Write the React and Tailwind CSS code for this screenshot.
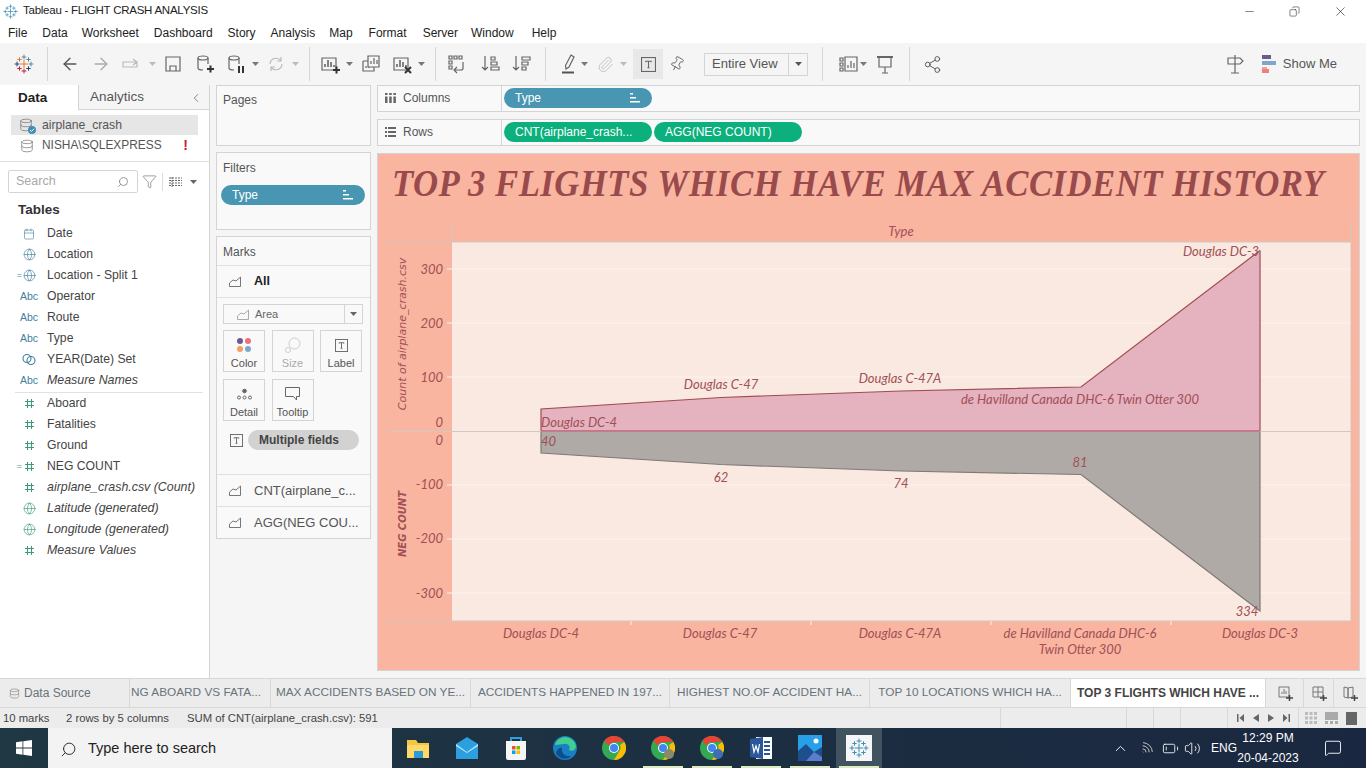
import { Search, Globe, Calendar, ChevronLeft, ChevronUp, Filter, Minus, X, Copy, Volume2, Wifi, BatteryLow, MessageSquare, Database, ArrowLeft, ArrowRight, Pin, Paperclip, Share2 } from 'lucide-react';

const TableauLogo = ({ colors = ['#e8762c', '#5b879b', '#c72035', '#1f447a', '#59879b'], size = 20 }) => {
  const marks = [
    [10, 10, 4, colors[0]],
    [10, 3, 2.4, colors[1]],
    [10, 17, 2.4, colors[2]],
    [3, 10, 2.4, colors[3]],
    [17, 10, 2.4, colors[1]],
    [5.5, 5.5, 2.2, colors[0]],
    [14.5, 5.5, 2.2, colors[4]],
    [5.5, 14.5, 2.2, colors[2]],
    [14.5, 14.5, 2.2, colors[3]],
  ];
  return (
    <svg width={size} height={size} viewBox="0 0 20 20" strokeWidth="1" className="shrink-0">
      {marks.map(([x, y, r, c], i) => (
        <path key={i} d={`M${x - r} ${y}H${x + r}M${x} ${y - r}V${y + r}`} stroke={c} />
      ))}
    </svg>
  );
};

const Ico = ({ children, className = '', w = 20 }) => (
  <svg width={w} height="20" viewBox={`0 0 ${w} 20`} fill="none" stroke="#666" strokeWidth="1.2" className={`shrink-0 ${className}`}>
    {children}
  </svg>
);

const Caret = ({ className = '', color = '#777' }) => (
  <svg width="7" height="4" viewBox="0 0 7 4" className={`shrink-0 ${className}`}><path d="M0 0h7L3.5 4z" fill={color} /></svg>
);

const Sep = ({ className = '' }) => <div className={`w-px h-[34px] bg-[#d6d6d6] shrink-0 ${className}`} />;

const BarsIcon = ({ plus, cross, light }) => (
  <Ico>
    <path d="M2 4h14v12H2z" stroke={light ? '#999' : '#666'} />
    <path d="M5 13v-3M8 13V6M11 13V8M14 13v-2" strokeWidth="1.6" />
    {plus && <path d="M13 16h7M16.5 12.500v7" stroke="#333" strokeWidth="2" />}
    {cross && <path d="M13 13l6 6M19 13l-6 6" stroke="#333" strokeWidth="2" />}
  </Ico>
);

const AreaIcon = ({ color = '#777' }) => (
  <svg width="14" height="13" viewBox="0 0 14 13" fill="none" stroke={color} strokeWidth="1" className="shrink-0">
    <path d="M1.500 11.500h11V2L8 6 5 5 1.500 8z" />
  </svg>
);

const TBox = ({ size = 14 }) => (
  <svg width={size} height={size} viewBox="0 0 14 14" fill="none" stroke="#666" strokeWidth="1" className="shrink-0">
    <rect x=".5" y=".5" width="13" height="13" />
    <path d="M4.500 5V4h5v1M7 4v6M6 10h2" />
  </svg>
);

const Hash = ({ color = '#3e9a78' }) => (
  <svg width="11" height="11" viewBox="0 0 11 11" fill="none" stroke={color} strokeWidth="1.1" className="shrink-0">
    <path d="M3.500 1v9M7.500 1v9M1 3.500h9M1 7.500h9" />
  </svg>
);

const SortMini = ({ color = '#fff' }) => (
  <svg width="12" height="10" viewBox="0 0 12 10" className="shrink-0"><path d="M1 0h3v1.500H1zM1 4h6v1.500H1zM1 8h10v1.500H1z" fill={color} /></svg>
);

const fieldsTop = [
  { icon: 'cal', name: 'Date' },
  { icon: 'globe', name: 'Location' },
  { icon: 'globe', name: 'Location - Split 1', calc: true },
  { icon: 'abc', name: 'Operator' },
  { icon: 'abc', name: 'Route' },
  { icon: 'abc', name: 'Type' },
  { icon: 'set', name: 'YEAR(Date) Set' },
  { icon: 'abc', name: 'Measure Names', italic: true },
];

const fieldsBottom = [
  { icon: 'hash', name: 'Aboard' },
  { icon: 'hash', name: 'Fatalities' },
  { icon: 'hash', name: 'Ground' },
  { icon: 'hash', name: 'NEG COUNT', calc: true },
  { icon: 'hash', name: 'airplane_crash.csv (Count)', italic: true },
  { icon: 'globeg', name: 'Latitude (generated)', italic: true },
  { icon: 'globeg', name: 'Longitude (generated)', italic: true },
  { icon: 'hash', name: 'Measure Values', italic: true },
];

const FieldRow = ({ icon, name, calc, italic }) => (
  <div className="h-[21px] flex items-center">
    <div className="w-[22px] shrink-0 text-right text-[9px] leading-none text-[#4a8aa5]">{calc ? '=' : ''}</div>
    <div className="w-[14px] shrink-0 flex justify-center">
      {icon === 'cal' && <Calendar size={12} strokeWidth={1.2} color="#3f7f9c" />}
      {icon === 'globe' && <Globe size={13} strokeWidth={1.2} color="#3f7f9c" />}
      {icon === 'globeg' && <Globe size={13} strokeWidth={1.2} color="#3e9a78" />}
      {icon === 'hash' && <Hash />}
      {icon === 'abc' && <span className="text-[10.500px] font-medium text-[#3f7f9c]">Abc</span>}
      {icon === 'set' && (
        <svg width="14" height="13" viewBox="0 0 14 13" fill="none" stroke="#3f7f9c" strokeWidth="1.1" className="shrink-0"><circle cx="5" cy="5.500" r="4" /><circle cx="9" cy="7.500" r="4" /></svg>
      )}
    </div>
    <span className={`ml-[11px] text-[#444] whitespace-nowrap ${italic ? 'italic text-[12.400px]' : 'text-[12.200px]'}`}>{name}</span>
  </div>
);

const MarkBtn = ({ label, muted, children }) => (
  <div className="w-[42px] h-[42px] border border-[#d4d4d4] flex flex-col items-center justify-end">
    <div className="h-[20px] flex items-center justify-center">{children}</div>
    <span className={`text-[11px] leading-[16px] ${muted ? 'text-[#aaa]' : 'text-[#555]'}`}>{label}</span>
  </div>
);

const Pill = ({ color, w, children, sort }) => (
  <div className={`h-[20px] rounded-full ${color} ${w} flex items-center pl-[11px] pr-[11px] text-[12px] text-white justify-between shrink-0 whitespace-nowrap`}>
    <span>{children}</span>
    {sort && <SortMini />}
  </div>
);

const tabs = [
  { label: 'NG ABOARD VS FATA...', w: 'w-[141px]', cls: 'justify-start pl-[1px]' },
  { label: 'MAX ACCIDENTS BASED ON YE...', w: 'w-[200px]', cls: 'justify-center' },
  { label: 'ACCIDENTS HAPPENED IN 197...', w: 'w-[199px]', cls: 'justify-center' },
  { label: 'HIGHEST NO.OF ACCIDENT HA...', w: 'w-[200px]', cls: 'justify-center' },
  { label: 'TOP 10 LOCATIONS WHICH HA...', w: 'w-[201px]', cls: 'justify-center' },
];

const Chart = () => {
  const topPts = '541,431 541,409 721,397.500 901,391 1081,387 1260,250.500 1260,431';
  const botPts = '541,432 541,453 721,464.500 901,471 1081,474.500 1260,611 1260,432';
  const labelCls = 'fill-[#a24f57] italic';
  const titleCls = "fill-[#a24f57] italic font-['DejaVu_Sans',sans-serif]";
  return (
    <svg viewBox="378 221 983 449" width="983" height="449" className="block font-['Lato',sans-serif] text-[13px]">
      <rect x="452" y="242" width="899" height="379" fill="#f9e9e0" />
      {[269, 323, 377, 485, 539, 593].map(y => (
        <g key={y}>
          <path d={`M452 ${y}H1351`} stroke="#fbf3ee" strokeWidth="1" />
          <path d={`M447 ${y}H452`} stroke="#fbf3ee" strokeWidth="1" />
        </g>
      ))}
      <path d="M387 242H1351M387 621H1351M452 221V242M1351 221V621" stroke="#d2c7c2" strokeWidth="1" />
      {[631, 811, 991, 1171].map(x => <path key={x} d={`M${x} 621v4`} stroke="#fbf3ee" />)}

      <polygon points={topPts} fill="#e5b2bf" />
      <path d="M541 431V409L721 397.500 901 391 1081 387 1260 250.500" fill="none" stroke="#a04c50" strokeWidth="1.200" />
      <path d="M1260 250.500V431" fill="none" stroke="#b06d78" strokeWidth="1.600" />
      <polygon points={botPts} fill="#b0aaa6" />
      <path d="M541 432V453L721 464.500 901 471 1081 474.500 1260 611V432" fill="none" stroke="#7f7977" strokeWidth="1.200" />
      <path d="M387 431.500H1351" stroke="#d2c7c2" strokeWidth="1" />
      <path d="M541 431H1260" stroke="#bb6479" strokeWidth="1.500" />

      <text x="901" y="236" textAnchor="middle" className={labelCls}>Type</text>
      {[['300', 274], ['200', 328], ['100', 382], ['0', 427], ['0', 445], ['-100', 489], ['-200', 543], ['-300', 598]].map(([t, y], i) => (
        <text key={i} x="443" y={y} textAnchor="end" className={labelCls}>{t}</text>
      ))}
      <text transform="translate(406 334) rotate(-90)" textAnchor="middle" className={`${titleCls} text-[11px]`}>Count of airplane_crash.csv</text>
      <text transform="translate(406 524) rotate(-90)" textAnchor="middle" className={`${titleCls} font-bold text-[10px]`}>NEG COUNT</text>

      <text x="541" y="427" className={labelCls}>Douglas DC-4</text>
      <text x="721" y="389" textAnchor="middle" className={labelCls}>Douglas C-47</text>
      <text x="900" y="383" textAnchor="middle" className={labelCls}>Douglas C-47A</text>
      <text x="1080" y="404" textAnchor="middle" className={labelCls}>de Havilland Canada DHC-6 Twin Otter 300</text>
      <text x="1259" y="256" textAnchor="end" className={labelCls}>Douglas DC-3</text>
      <text x="541" y="446" className={labelCls}>40</text>
      <text x="721" y="482" textAnchor="middle" className={labelCls}>62</text>
      <text x="901" y="488" textAnchor="middle" className={labelCls}>74</text>
      <text x="1080" y="467" textAnchor="middle" className={labelCls}>81</text>
      <text x="1247" y="616" textAnchor="middle" className={labelCls}>334</text>

      <text x="541" y="638" textAnchor="middle" className={labelCls}>Douglas DC-4</text>
      <text x="720" y="638" textAnchor="middle" className={labelCls}>Douglas C-47</text>
      <text x="900" y="638" textAnchor="middle" className={labelCls}>Douglas C-47A</text>
      <text x="1080" y="638" textAnchor="middle" className={labelCls}>de Havilland Canada DHC-6</text>
      <text x="1080" y="654" textAnchor="middle" className={labelCls}>Twin Otter 300</text>
      <text x="1260" y="638" textAnchor="middle" className={labelCls}>Douglas DC-3</text>
    </svg>
  );
};

const TaskIcon = ({ ml, running, children, bg }) => (
  <div className={`${ml} w-[46px] h-[40px] flex items-center justify-center relative shrink-0 ${bg || ''}`}>
    {children}
    {running && <div className="absolute bottom-0 inset-x-[3px] h-[2px] bg-[#dcebc2]" />}
  </div>
);

const ChromeIcon = ({ badge }) => (
  <svg width="24" height="24" viewBox="0 0 24 24">
    <circle cx="12" cy="12" r="12" fill="#34a853" />
    <path d="M12 0a12 12 0 0 1 10.400 6H12a6 6 0 0 0-5.600 3.800L2.400 4.600A12 12 0 0 1 12 0z" fill="#ea4335" />
    <path d="M22.400 6A12 12 0 0 1 12 24l5-8.500A6 6 0 0 0 18 9z" fill="#fbbc05" />
    <circle cx="12" cy="12" r="5" fill="#fff" />
    <circle cx="12" cy="12" r="4" fill="#4285f4" />
    {badge && <circle cx="18" cy="18" r="5" fill={badge} />}
  </svg>
);

export default function App() {
  return (
    <div className="w-[1366px] h-[768px] overflow-hidden flex flex-col bg-[#f5f5f5] font-['Liberation_Sans',Arial,sans-serif] text-[#333]">
      {/* Title bar */}
      <div className="h-[22px] bg-white flex items-center shrink-0">
        <div className="ml-[3px]"><TableauLogo size={15} colors={['#3f8fb5', '#3f8fb5', '#3f8fb5', '#3f8fb5', '#3f8fb5']} /></div>
        <span className="ml-[5px] text-[11.500px] tracking-[-0.25px] text-[#222]">Tableau - FLIGHT CRASH ANALYSIS</span>
        <div className="ml-auto flex items-center">
          <Minus size={13} strokeWidth={1} color="#222" />
          <Copy size={11} strokeWidth={1.2} color="#222" className="ml-[33px] -scale-x-100" />
          <X size={15} strokeWidth={1} color="#222" className="ml-[33px] mr-[18px]" />
        </div>
      </div>

      {/* Menu */}
      <div className="h-[21px] bg-white flex items-center text-[12px] text-[#222] shrink-0">
        <span className="ml-[8px]">File</span>
        <span className="ml-[15px]">Data</span>
        <span className="ml-[14px]">Worksheet</span>
        <span className="ml-[15px]">Dashboard</span>
        <span className="ml-[15px]">Story</span>
        <span className="ml-[15px]">Analysis</span>
        <span className="ml-[14px]">Map</span>
        <span className="ml-[16px]">Format</span>
        <span className="ml-[16px]">Server</span>
        <span className="ml-[13px]">Window</span>
        <span className="ml-[18px]">Help</span>
      </div>

      {/* Toolbar */}
      <div className="h-[42px] flex items-center shrink-0">
        <div className="ml-[14px]"><TableauLogo /></div>
        <Sep className="ml-[13px]" />
        <ArrowLeft size={20} strokeWidth={1.6} color="#555" className="ml-[12px] shrink-0" />
        <ArrowRight size={20} strokeWidth={1.6} color="#aaa" className="ml-[11px] shrink-0" />
        <Ico className="ml-[10px]"><path d="M2 8h14v5H2zM12 5l4 3-4 3" stroke="#bbb" /></Ico>
        <Caret className="ml-[8px]" color="#bbb" />
        <Ico className="ml-[7px]"><path d="M3 3h14v14H3zM7 17v-5h6v5" /></Ico>
        <Ico className="ml-[12px]">
          <ellipse cx="8" cy="4" rx="5" ry="2" /><path d="M3 4v10q0 2 5 2M13 4v6" />
          <path d="M12 15h7M15.500 11.500v7" stroke="#333" strokeWidth="2" />
        </Ico>
        <Ico className="ml-[11px]">
          <ellipse cx="8" cy="4" rx="5" ry="2" /><path d="M3 4v10q0 2 5 2M13 4v6" />
          <path d="M13 12v7M17 12v7" stroke="#333" strokeWidth="2" />
        </Ico>
        <Caret className="ml-[6px]" />
        <Ico className="ml-[7px]"><path d="M4 10a6 6 0 0 1 11-3M16 10a6 6 0 0 1-11 3M15 3v4h-4M5 17v-4h4" stroke="#bbb" /></Ico>
        <Caret className="ml-[6px]" color="#bbb" />
        <Sep className="ml-[10px]" />
        <div className="ml-[10px]"><BarsIcon plus /></div>
        <Caret className="ml-[6px]" />
        <Ico className="ml-[8px]"><path d="M7 2h11v11H7zM2 7h5M2 7v10h11v-4M10 10V7M13 10V4M16 10V6M5 14v-2M8 14v-1" /></Ico>
        <div className="ml-[11px]"><BarsIcon cross /></div>
        <Caret className="ml-[6px]" />
        <Sep className="ml-[10px]" />
        <Ico className="ml-[11px]"><path d="M2 2h3v3H2zM7 2h3v3H7zM12 2h3v3h-3zM2 7h3v3H2zM2 12h3v3H2zM16 8v6a2 2 0 0 1-2 2H8M10 13l-3 3 3 3" /></Ico>
        <Ico className="ml-[13px]"><path d="M5 2v14M2 13l3 3 3-3M11 3h4v3h-4zM11 8h6v3h-6zM11 13h8v3h-8z" /></Ico>
        <Ico className="ml-[11px]"><path d="M5 2v14M2 13l3 3 3-3M11 3h8v3h-8zM11 8h6v3h-6zM11 13h4v3h-4z" /></Ico>
        <Sep className="ml-[14px]" />
        <Ico className="ml-[12px]">
          <path d="M13 1l3 2-5 10-3 2-.500-3.500z" />
          <path d="M4 18.500h12" stroke="#555" strokeWidth="2" />
        </Ico>
        <Caret className="ml-[3px]" />
        <div className="ml-[7px] w-[20px] flex justify-center shrink-0"><Paperclip size={17} strokeWidth={1.2} color="#bbb" /></div>
        <Caret className="ml-[5px]" color="#bbb" />
        <div className="ml-[6px] w-[30px] h-[30px] bg-[#e8e8e8] flex items-center justify-center shrink-0"><TBox size={15} /></div>
        <Pin size={16} strokeWidth={1.2} color="#555" className="ml-[6px] mr-[2px] rotate-[30deg] shrink-0" />
        <div className="ml-[17px] w-[104px] h-[23px] border border-[#d4d4d4] flex items-center shrink-0">
          <span className="pl-[7px] flex-1 text-[13px] text-[#555]">Entire View</span>
          <div className="w-[19px] h-full border-l border-[#d4d4d4] flex items-center justify-center"><Caret color="#555" /></div>
        </div>
        <Sep className="ml-[14px]" />
        <Ico className="ml-[15px]"><path d="M2 4h3v3H2zM2 9h3v3H2zM2 14h3v3H2zM7 3h12v14H7zM10 14v-3M13 14V7M16 14v-5" /></Ico>
        <Caret className="ml-[2px]" />
        <Ico className="ml-[8px]"><path d="M2 3h16" strokeWidth="2" /><path d="M4 3v10h12V3M10 13v6M7 19h6" /></Ico>
        <Sep className="ml-[14px]" />
        <div className="ml-[12px] w-[20px] flex justify-center shrink-0"><Share2 size={19} strokeWidth={1.200} color="#555" /></div>
        <div className="ml-auto flex items-center">
          <Ico><path d="M10 1v18M6 19h8M3 4h12l3 3-3 3H3z" /></Ico>
          <svg width="14" height="18" viewBox="0 0 14 18" className="ml-[17px] shrink-0">
            <rect width="9" height="4" fill="#6d5a8c" />
            <rect y="6" width="14" height="4" fill="#7fa6cc" />
            <rect y="12" width="5" height="2" fill="#f0a878" />
            <rect y="14" width="7" height="4" fill="#ef7f85" />
          </svg>
          <span className="ml-[7px] mr-[29px] text-[13px] text-[#555]">Show Me</span>
        </div>
      </div>

      {/* Main */}
      <div className="h-[593px] flex shrink-0">
        {/* Data pane */}
        <aside className="w-[210px] h-full bg-white border-r border-[#d4d4d4] shrink-0">
          <div className="h-[25px] flex">
            <div className="w-[78px] pl-[18px] pt-[1px] flex items-center text-[13.500px] font-bold text-[#222]">Data</div>
            <div className="flex-1 bg-[#f5f5f5] border-l border-b border-[#d4d4d4] flex items-center pl-[11px] pr-[6px] pt-[1px] text-[13.500px] text-[#555]">
              <span className="flex-1">Analytics</span>
              <ChevronLeft size={14} strokeWidth={1.3} color="#666" />
            </div>
          </div>
          <div className="mt-[5px] mx-[11px] h-[20px] bg-[#e6e6e6] flex items-center pl-[8px] pr-[4px] text-[#555]">
            <div className="relative w-[15px] h-[15px] shrink-0">
              <Database size={14} strokeWidth={1.1} color="#666" />
              <svg width="8" height="8" viewBox="0 0 8 8" className="absolute -right-[2px] -bottom-[1px]"><circle cx="4" cy="4" r="4" fill="#3f8fb5" /><path d="M2 4l1.500 1.500L6 2.800" fill="none" stroke="#fff" /></svg>
            </div>
            <span className="ml-[8px] text-[12.200px]">airplane_crash</span>
          </div>
          <div className="mx-[11px] h-[20px] flex items-center pl-[9px] pt-[1px] text-[#555]">
            <Database size={14} strokeWidth={1.1} color="#666" />
            <span className="ml-[8px] text-[11.900px] flex-1">NISHA\SQLEXPRESS</span>
            <span className="mr-[10px] text-[#c72035] font-bold text-[14px]">!</span>
          </div>
          <div className="mt-[6px] h-px bg-[#e2e2e2]" />
          <div className="mt-[8px] h-[23px] flex items-center">
            <div className="ml-[8px] w-[130px] h-[23px] border border-[#d4d4d4] rounded-[2px] flex items-center pl-[7px] pr-[8px]">
              <span className="flex-1 text-[12.500px] text-[#a8a8a8]">Search</span>
              <Search size={12} strokeWidth={1.3} color="#666" className="-scale-x-100" />
            </div>
            <Filter size={15} strokeWidth={1} color="#666" className="ml-[4px]" />
            <div className="ml-[5px] w-px h-[18px] bg-[#ddd]" />
            <svg width="13" height="10" viewBox="0 0 13 10" className="ml-[6px]" fill="none" stroke="#666"><path d="M0 1h13M0 3.500h13M0 6h13M0 8.500h13M3 0v10" strokeDasharray="2 1" /></svg>
            <Caret className="ml-[8px]" color="#666" />
          </div>
          <div className="mt-[8px] pl-[18px] h-[18px] flex items-center text-[13.500px] font-bold text-[#333]">Tables</div>
          <div className="mt-[4px]">
            {fieldsTop.map(f => <FieldRow key={f.name} {...f} />)}
          </div>
          <div className="mt-[1px] ml-[15px] w-[188px] h-px bg-[#e2e2e2]" />
          <div>
            {fieldsBottom.map(f => <FieldRow key={f.name} {...f} />)}
          </div>
        </aside>

        {/* Cards column */}
        <div className="ml-[6px] w-[155px] flex flex-col gap-[6px] shrink-0">
          <div className="h-[61px] bg-[#f9f9f9] border border-[#d4d4d4] pl-[6px] pt-[5px] text-[12px] text-[#555]">Pages</div>
          <div className="h-[78px] bg-[#f9f9f9] border border-[#d4d4d4] text-[12px] text-[#555]">
            <div className="pl-[6px] pt-[6px] h-[32px]">Filters</div>
            <div className="ml-[4px]"><Pill color="bg-[#4996b2]" w="w-[144px]" sort>Type</Pill></div>
          </div>
          <div className="h-[303px] bg-[#f9f9f9] border border-[#d4d4d4] text-[#555]">
            <div className="h-[29px] border-b border-[#e0e0e0] pl-[6px] pt-[2px] flex items-center text-[12px]">Marks</div>
            <div className="h-[32px] border-b border-[#e0e0e0] pl-[11px] flex items-center">
              <AreaIcon />
              <span className="ml-[12px] text-[12.500px] font-bold text-[#222]">All</span>
            </div>
            <div className="mt-[6px] ml-[6px] w-[140px] h-[20px] border border-[#d4d4d4] flex items-center">
              <div className="ml-[12px]"><AreaIcon color="#aaa" /></div>
              <span className="ml-[5px] flex-1 text-[11px] text-[#666]">Area</span>
              <div className="w-[18px] h-full border-l border-[#d4d4d4] flex items-center justify-center"><Caret color="#666" /></div>
            </div>
            <div className="mt-[6px] ml-[6px] flex gap-[6.500px]">
              <MarkBtn label="Color">
                <svg width="16" height="16" viewBox="0 0 16 16"><circle cx="4" cy="4" r="3" fill="#6d5a8c" /><circle cx="12" cy="4" r="3" fill="#ef6f7f" /><circle cx="4" cy="12" r="3" fill="#f0a060" /><circle cx="12" cy="12" r="3" fill="#7fa6cc" /></svg>
              </MarkBtn>
              <MarkBtn label="Size" muted>
                <svg width="16" height="16" viewBox="0 0 16 16" fill="none" stroke="#ccc"><circle cx="9.500" cy="6.500" r="5.500" /><circle cx="3" cy="13" r="2.500" /></svg>
              </MarkBtn>
              <MarkBtn label="Label"><TBox size={13} /></MarkBtn>
            </div>
            <div className="mt-[7px] ml-[6px] flex gap-[6.500px]">
              <MarkBtn label="Detail">
                <svg width="15" height="12" viewBox="0 0 15 12" fill="none" stroke="#666"><circle cx="7.500" cy="3" r="1.800" fill="#666" /><circle cx="2" cy="9.500" r="1.500" /><circle cx="7.500" cy="9.500" r="1.500" /><circle cx="13" cy="9.500" r="1.500" /></svg>
              </MarkBtn>
              <MarkBtn label="Tooltip">
                <svg width="15" height="14" viewBox="0 0 15 14" fill="none" stroke="#666"><path d="M.5.5h14v9h-3v3.500l-3-3.500h-8z" /></svg>
              </MarkBtn>
            </div>
            <div className="mt-[9px] flex items-center ml-[13px]">
              <TBox size={13} />
              <div className="ml-[5px] w-[111px] h-[20px] rounded-full bg-[#d2d2d2] pl-[11px] flex items-center text-[12px] font-semibold text-[#444]">Multiple fields</div>
            </div>
            <div className="mt-[24px] h-[32px] border-t border-[#e0e0e0] pl-[11px] flex items-center">
              <AreaIcon />
              <span className="ml-[12px] text-[13px]">CNT(airplane_c...</span>
            </div>
            <div className="h-[32px] border-t border-[#e0e0e0] pl-[11px] flex items-center">
              <AreaIcon />
              <span className="ml-[12px] text-[13px]">AGG(NEG COU...</span>
            </div>
          </div>
        </div>

        {/* Shelves and view */}
        <div className="ml-[6px] w-[983px] shrink-0 flex flex-col">
          <div className="h-[27px] bg-[#f9f9f9] border border-[#d4d4d4] flex items-center">
            <div className="w-[124px] h-full border-r border-[#d4d4d4] flex items-center pl-[7px] pb-[2px] text-[12px] text-[#555]">
              <svg width="11" height="10" viewBox="0 0 11 10"><path d="M0 0h2.500v2H0zM4.200 0h2.500v2H4.200zM8.400 0h2.500v2H8.400zM0 3.500h2.500V10H0zM4.200 3.500h2.500V10H4.200zM8.400 3.500h2.500V10H8.400z" fill="#666" /></svg>
              <span className="ml-[7px]">Columns</span>
            </div>
            <div className="ml-[2px] mb-[2px]"><Pill color="bg-[#4996b2]" w="w-[148px]" sort>Type</Pill></div>
          </div>
          <div className="mt-[7px] h-[27px] bg-[#f9f9f9] border border-[#d4d4d4] flex items-center">
            <div className="w-[124px] h-full border-r border-[#d4d4d4] flex items-center pl-[7px] pb-[2px] text-[12px] text-[#555]">
              <svg width="11" height="10" viewBox="0 0 11 10"><path d="M0 0h2v2H0zM3 0h8v2H3zM0 4h2v2H0zM3 4h8v2H3zM0 8h2v2H0zM3 8h8v2H3z" fill="#666" /></svg>
              <span className="ml-[7px]">Rows</span>
            </div>
            <div className="ml-[2px] mb-[2px] flex gap-[2px]">
              <Pill color="bg-[#0bb07c]" w="w-[148px]">CNT(airplane_crash...</Pill>
              <Pill color="bg-[#0bb07c]" w="w-[148px]">AGG(NEG COUNT)</Pill>
            </div>
          </div>
          <div className="mt-[7px] h-[518px] bg-[#f9b59f] border border-[#d4d4d4] overflow-hidden">
            <div className="h-[67px] pl-[14px] pt-[7px]">
              <div className="origin-left scale-x-[0.914] w-fit whitespace-nowrap font-['Liberation_Serif',serif] font-bold italic text-[38px] leading-[44px] tracking-[0.5px] text-[#994a4d]">TOP 3 FLIGHTS WHICH HAVE MAX ACCIDENT HISTORY</div>
            </div>
            <Chart />
          </div>
        </div>
      </div>

      {/* Sheet tabs */}
      <div className="h-[29px] flex bg-[#ececec] border-t border-[#d8d8d8] text-[11.800px] text-[#68737a] shrink-0">
        <div className="w-[130px] flex items-center pl-[9px] border-r border-[#d8d8d8] text-[12px]">
          <Database size={11} strokeWidth={1.2} color="#777" />
          <span className="ml-[4px]">Data Source</span>
        </div>
        {tabs.map(t => (
          <div key={t.label} className={`${t.w} flex items-center overflow-hidden whitespace-nowrap border-r border-[#d8d8d8] ${t.cls}`}>{t.label}</div>
        ))}
        <div className="w-[194px] bg-white flex items-center justify-center text-[12px] font-semibold text-[#444] whitespace-nowrap">TOP 3 FLIGHTS WHICH HAVE ...</div>
        <div className="flex-1 flex">
          <div className="w-[38px] flex items-center justify-center border-l border-[#d8d8d8]">
            <svg width="16" height="16" viewBox="0 0 16 16" fill="none" stroke="#777"><path d="M2 2h10v10H2zM5 9V7M7 9V4M9 9V6" /><path d="M9 13h7M12.500 10v6" stroke="#444" strokeWidth="1.500" /></svg>
          </div>
          <div className="w-[30px] flex items-center justify-center border-l border-[#d8d8d8]">
            <svg width="16" height="16" viewBox="0 0 16 16" fill="none" stroke="#777"><path d="M2 2h10v10H2zM7 2v10M2 7h10" /><path d="M9 13h7M12.500 10v6" stroke="#444" strokeWidth="1.500" /></svg>
          </div>
          <div className="flex-1 flex items-center justify-center border-l border-[#d8d8d8]">
            <svg width="16" height="16" viewBox="0 0 16 16" fill="none" stroke="#777"><path d="M2 2l4 1v10l-4-1zM6 3l5-1v10l-5 1z" /><path d="M9 13h7M12.500 10v6" stroke="#444" strokeWidth="1.500" /></svg>
          </div>
        </div>
      </div>

      {/* Status bar */}
      <div className="h-[21px] flex items-center bg-[#ececec] border-t border-[#d8d8d8] text-[11.300px] text-[#444] shrink-0">
        <span className="ml-[3px] w-[63px]">10 marks</span>
        <span className="w-[121px]">2 rows by 5 columns</span>
        <span className="w-[813px]">SUM of CNT(airplane_crash.csv): 591</span>
        <div className="h-full w-[126px] border-l border-[#d8d8d8]" />
        <div className="h-full w-[27px] border-l border-[#d8d8d8]" />
        <div className="h-full w-[27px] border-l border-[#d8d8d8]" />
        <div className="h-full w-[47px] border-l border-[#d8d8d8]" />
        <div className="h-full w-[71px] border-l border-[#d8d8d8] flex items-center justify-around px-[4px]">
          <svg width="7" height="8" viewBox="0 0 7 8" fill="#666"><path d="M0 0h1.500v8H0zM7 0v8L2.500 4z" /></svg>
          <svg width="6" height="8" viewBox="0 0 6 8" fill="#666"><path d="M6 0v8L0 4z" /></svg>
          <svg width="6" height="8" viewBox="0 0 6 8" fill="#666"><path d="M0 0v8l6-4z" /></svg>
          <svg width="7" height="8" viewBox="0 0 7 8" fill="#666"><path d="M7 0H5.500v8H7zM0 0v8l4.500-4z" /></svg>
        </div>
        <div className="h-full flex-1 border-l border-[#d8d8d8] flex items-center pl-[6px] gap-[8px]">
          <svg width="12" height="12" viewBox="0 0 12 12" fill="#bbb"><path d="M0 0h3v3H0zM4.500 0h3v3h-3zM9 0h3v3H9zM0 4.500h3v3H0zM4.500 4.500h3v3h-3zM9 4.500h3v3H9zM0 9h3v3H0zM4.500 9h3v3h-3zM9 9h3v3H9z" /></svg>
          <svg width="13" height="12" viewBox="0 0 13 12" fill="#aaa"><path d="M0 0h13v8H0zM0 9h3v3H0zM5 9h3v3H5zM10 9h3v3h-3z" /></svg>
          <svg width="11" height="13" viewBox="0 0 11 13" fill="#666"><path d="M0 0h11v13H0z" /></svg>
        </div>
      </div>

      {/* Windows taskbar */}
      <div className="h-[40px] flex items-center bg-linear-to-r from-[#1f3843] to-[#1a2740] shrink-0">
        <svg width="16" height="16" viewBox="0 0 16 16" fill="#fff" className="ml-[16px] shrink-0"><path d="M0 2.200l6.500-.9v6.300H0zM7.300 1.200L16 0v7.600H7.300zM0 8.400h6.500v6.300L0 13.800zM7.300 8.400H16V16l-8.700-1.200z" /></svg>
        <div className="ml-[16px] w-[344px] h-[40px] bg-[#f3f3f3] flex items-center pt-[2px] shrink-0">
          <Search size={17} strokeWidth={1.3} color="#222" className="ml-[12px] -scale-x-100" />
          <span className="ml-[11px] text-[14.500px] text-[#222]">Type here to search</span>
        </div>
        <TaskIcon ml="ml-[3px]">
          <svg width="24" height="22" viewBox="0 0 24 22"><path d="M1 3h9l2 3h11v15H1z" fill="#f4c542" /><path d="M1 8h22v13H1z" fill="#ffd968" /><path d="M8 14h9v7H8z" fill="#2d9ad8" /></svg>
        </TaskIcon>
        <TaskIcon ml="ml-[3px]">
          <svg width="24" height="22" viewBox="0 0 24 22"><path d="M1 7L12 0l11 7v15H1z" fill="#2b9fe0" /><path d="M1 7l11 8 11-8v2l-11 7L1 9z" fill="#bfe5fa" /></svg>
        </TaskIcon>
        <TaskIcon ml="ml-[3px]">
          <svg width="22" height="24" viewBox="0 0 22 24"><path d="M1 5h20v17a2 2 0 0 1-2 2H3a2 2 0 0 1-2-2z" fill="#f5f5f5" /><path d="M6 5V2h10v3" fill="none" stroke="#2b9fe0" strokeWidth="2" /><rect x="7" y="10" width="3.500" height="3.500" fill="#f25022" /><rect x="11.500" y="10" width="3.500" height="3.500" fill="#7fba00" /><rect x="7" y="14.500" width="3.500" height="3.500" fill="#00a4ef" /><rect x="11.500" y="14.500" width="3.500" height="3.500" fill="#ffb900" /></svg>
        </TaskIcon>
        <TaskIcon ml="ml-[3px]">
          <svg width="24" height="24" viewBox="0 0 24 24"><circle cx="12" cy="12" r="12" fill="#1a7fc4" /><path d="M2 8A11 11 0 0 1 23 10c0 4-4 6-7 4 2-3-1-7-5-6-5 0-9 2-9 0z" fill="#3fcf8e" /><path d="M9 12c-1 5 3 9 9 8-3 4-12 4-15-3 1-4 4-6 6-5z" fill="#0c4f8a" /></svg>
        </TaskIcon>
        <TaskIcon ml="ml-[3px]"><ChromeIcon /></TaskIcon>
        <TaskIcon ml="ml-[3px]" running><ChromeIcon badge="#8a8a6a" /></TaskIcon>
        <TaskIcon ml="ml-[3px]" running><ChromeIcon badge="#3d6fb0" /></TaskIcon>
        <TaskIcon ml="ml-[3px]" running>
          <svg width="24" height="24" viewBox="0 0 24 24"><path d="M7 1h16v22H7z" fill="#fff" /><path d="M15 6h6M15 10h6M15 14h6M15 18h6" stroke="#2b579a" strokeWidth="2" /><path d="M1 3l13-2v22L1 21z" fill="#2b579a" /><path d="M3.500 8l1.500 8 2-6 2 6 1.500-8" fill="none" stroke="#fff" strokeWidth="1.200" /></svg>
        </TaskIcon>
        <TaskIcon ml="ml-[3px]" running>
          <svg width="24" height="26" viewBox="0 0 24 26"><rect width="24" height="26" fill="#27a0e8" /><path d="M0 26V16l8-7 8 8 8-5v14z" fill="#1d4f8f" /><path d="M8 26l8-9 8 5v4z" fill="#5b7dcc" /><circle cx="18" cy="6" r="2.500" fill="#fff" /></svg>
        </TaskIcon>
        <TaskIcon ml="ml-[3px]" running bg="bg-[#41535f]">
          <div className="w-[26px] h-[26px] bg-[#f4f6f8] flex items-center justify-center">
            <TableauLogo size={20} colors={['#3f8fb5', '#3f8fb5', '#3f8fb5', '#3f8fb5', '#3f8fb5']} />
          </div>
        </TaskIcon>
        <div className="ml-auto flex items-center text-white">
          <ChevronUp size={17} strokeWidth={1.3} color="#fff" />
          <Wifi size={15} strokeWidth={1.3} color="#ddd" className="ml-[10px] rotate-45" />
          <BatteryLow size={17} strokeWidth={1.2} color="#fff" className="ml-[8px]" />
          <Volume2 size={17} strokeWidth={1.2} color="#fff" className="ml-[5px]" />
          <span className="ml-[9.500px] text-[12px]">ENG</span>
          <div className="w-[62px] text-center text-[12px] leading-[20px]">
            <div>12:29 PM</div>
            <div>20-04-2023</div>
          </div>
          <MessageSquare size={18} strokeWidth={1.200} color="#fff" className="ml-[25px] mr-[24px]" />
        </div>
      </div>
    </div>
  );
}
